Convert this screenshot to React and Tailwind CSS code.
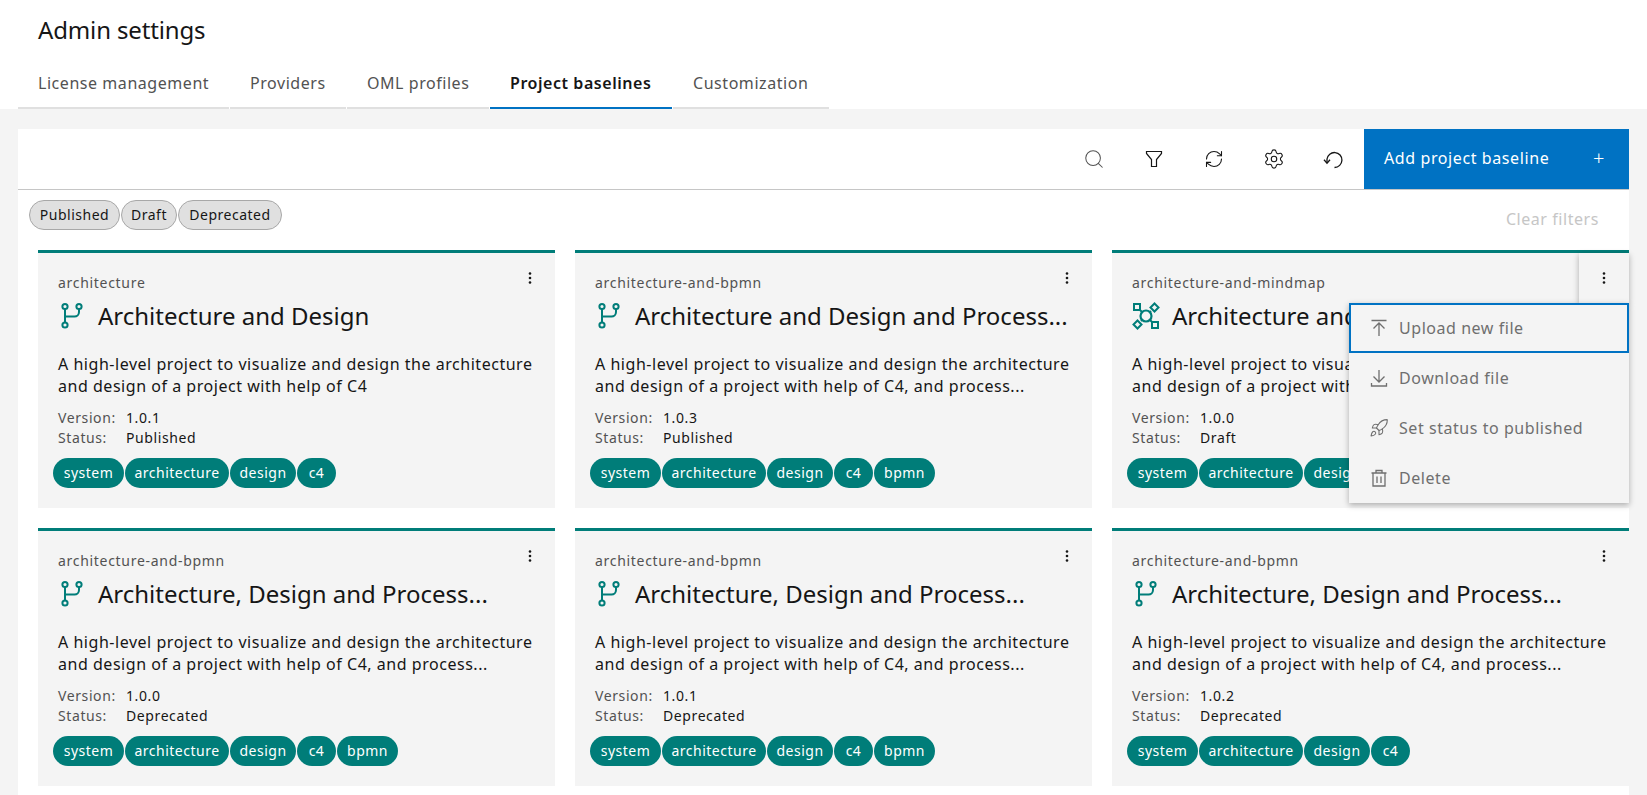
import React from "react";
import { Search, RefreshCw, Settings, Rocket } from "lucide-react";

const tabs = [
  ["License management", "w-[211px]"],
  ["Providers", "w-[116px]"],
  ["OML profiles", "w-[142px]"],
  ["Project baselines", "w-[182px]", true],
  ["Customization", "w-[156px]"],
];

const D1 = "A high-level project to visualize and design the architecture";
const D2 = "and design of a project with help of C4, and process...";
const base = ["system", "architecture", "design", "c4"];
const withB = [...base, "bpmn"];
const A = "Architecture, Design and Process...";

const tagW = {
  system: "w-[71px]",
  architecture: "w-[104px]",
  design: "w-[66px]",
  c4: "w-[39px]",
  bpmn: "w-[61px]",
};
const chipW = { Published: "w-[91px]", Draft: "w-[56px]", Deprecated: "w-[104px]" };

const cards = [
  { id: "architecture", title: "Architecture and Design", d2: "and design of a project with help of C4", v: "1.0.1", s: "Published", tags: base },
  { id: "architecture-and-bpmn", title: "Architecture and Design and Process...", d2: D2, v: "1.0.3", s: "Published", tags: withB },
  { id: "architecture-and-mindmap", title: "Architecture and Design and Mindmap", d2: D2, v: "1.0.0", s: "Draft", tags: base, mind: true, open: true },
  { id: "architecture-and-bpmn", title: A, d2: D2, v: "1.0.0", s: "Deprecated", tags: withB },
  { id: "architecture-and-bpmn", title: A, d2: D2, v: "1.0.1", s: "Deprecated", tags: withB },
  { id: "architecture-and-bpmn", title: A, d2: D2, v: "1.0.2", s: "Deprecated", tags: base },
];

function BranchIcon() {
  return (
    <svg width="28" height="28" viewBox="0 0 28 28" fill="none" stroke="#007d79" strokeWidth="2" className="shrink-0">
      <circle cx="7" cy="4.5" r="2.6" />
      <circle cx="21" cy="4.5" r="2.6" />
      <circle cx="7" cy="23" r="2.6" />
      <path d="M7 7.100V20.400M21 7.100V10a4.500 4.500 0 0 1-4.500 4.500H7" />
    </svg>
  );
}

function MindIcon() {
  return (
    <svg width="28" height="28" viewBox="0 0 28 28" fill="none" stroke="#007d79" strokeWidth="2" className="shrink-0">
      <circle cx="14" cy="14" r="5.500" strokeWidth="2.200" />
      <rect x="2" y="2" width="6" height="6" />
      <rect x="20" y="20" width="6" height="6" />
      <path d="M22.500 1.500l4 4-4 4-4-4zM5.500 18.500l4 4-4 4-4-4z" />
      <path d="M8 8l2.500 2.500M17.500 17.500L20 20M19 9l-1.500 1.500M9 19l1.500-1.500" />
    </svg>
  );
}

function Kebab() {
  return (
    <svg width="16" height="16" viewBox="0 0 16 16" fill="#161616">
      <circle cx="8" cy="3.500" r="1.300" />
      <circle cx="8" cy="8" r="1.300" />
      <circle cx="8" cy="12.500" r="1.300" />
    </svg>
  );
}

function UploadIcon() {
  return (
    <svg width="20" height="20" viewBox="0 0 20 20" fill="none" stroke="#6f6f6f" strokeWidth="1.300">
      <path d="M2.500 2.500h15M10 18V5M4.500 10.500L10 5l5.500 5.500" />
    </svg>
  );
}
function DownloadIcon() {
  return (
    <svg width="20" height="20" viewBox="0 0 20 20" fill="none" stroke="#6f6f6f" strokeWidth="1.300">
      <path d="M10 2v12M4.500 8.500L10 14l5.500-5.500M2.500 15v3h15v-3" />
    </svg>
  );
}
function TrashIcon() {
  return (
    <svg width="20" height="20" viewBox="0 0 20 20" fill="none" stroke="#6f6f6f" strokeWidth="1.300">
      <path d="M2.500 5h15M7 5V2.500h6V5M4 5v13h12V5M8 8.500v6.500M12 8.500v6.500" />
    </svg>
  );
}
function FunnelIcon() {
  return (
    <svg width="20" height="20" viewBox="0 0 20 20" fill="none" stroke="#161616" strokeWidth="1.200">
      <path d="M2.500 2.500h15v2l-5 6v7h-5v-7l-5-6z" />
    </svg>
  );
}
function ResetIcon() {
  return (
    <svg width="22" height="22" viewBox="0 0 22 22" fill="none" stroke="#161616" strokeWidth="1.300">
      <path d="M4 15V11a7.500 7.500 0 1 1 7.500 8.500" />
      <path d="M1 11.800l3 3.400 3-3.400" />
    </svg>
  );
}

function Card({ c }) {
  return (
    <div className="relative h-[258px] border-t-[3px] border-[#007d79] bg-[#f4f4f4] pt-5">
      <div className={`absolute right-0 top-0 z-10 flex h-[50px] w-[50px] items-center justify-center ${c.open ? "shadow-[0_2px_6px_rgba(0,0,0,0.3)]" : ""}`}>
        <Kebab />
      </div>
      <div className="pl-5 text-[14px] leading-5 tracking-[0.7px] text-[#525252]">{c.id}</div>
      <div className="mt-[7px] flex h-8 items-center pl-[20px]">
        {c.mind ? <MindIcon /> : <BranchIcon />}
        <div className="ml-3 whitespace-nowrap text-[24px] leading-8 text-[#161616]">{c.title}</div>
      </div>
      <div className="mt-[21px] whitespace-nowrap pl-5 text-[16px] leading-[22px] tracking-[0.53px] text-[#161616]">
        <div>{D1}</div>
        <div>{c.d2}</div>
      </div>
      <div className="mt-[11px] pl-5 text-[14px] leading-5 tracking-[0.6px]">
        <div className="flex"><span className="w-[68px] text-[#525252]">Version:</span><span className="text-[#161616]">{c.v}</span></div>
        <div className="flex"><span className="w-[68px] text-[#525252]">Status:</span><span className="text-[#161616]">{c.s}</span></div>
      </div>
      <div className="mt-[10px] flex gap-[1px] pl-[15px]">
        {c.tags.map((t) => (
          <span key={t} className={`flex h-[30px] items-center justify-center rounded-[15px] bg-[#007d79] pb-[2px] text-[14px] tracking-[0.5px] text-white ${tagW[t]}`}>{t}</span>
        ))}
      </div>
      {c.open && (
        <div className="absolute right-0 top-[50px] z-20 w-[280px] bg-[#f4f4f4] text-[16px] tracking-[0.55px] text-[#6f6f6f] shadow-[0_2px_6px_rgba(0,0,0,0.3)]">
          <div className="flex h-[50px] items-center gap-[10px] border-2 border-[#0072c3] pl-[18px]"><UploadIcon />Upload new file</div>
          <div className="flex h-[50px] items-center gap-[10px] pl-5"><DownloadIcon />Download file</div>
          <div className="flex h-[50px] items-center gap-[10px] pl-5"><Rocket size={20} strokeWidth={1.300} color="#6f6f6f" />Set status to published</div>
          <div className="flex h-[50px] items-center gap-[10px] pl-5"><TrashIcon />Delete</div>
        </div>
      )}
    </div>
  );
}

export default function App() {
  return (
    <div className="h-[795px] overflow-hidden bg-[#f4f4f4] font-['Noto_Sans',sans-serif]">
      <header className="h-[109px] bg-white pl-[18px]">
        <div className="flex h-[60px] items-center pl-5 text-[24px] tracking-[-0.15px] text-[#161616]">Admin settings</div>
        <nav className="flex h-[49px] gap-[1px]">
          {tabs.map(([t, w, active]) => (
            <div
              key={t}
              className={`flex items-center border-b-2 pb-[1px] pl-5 text-[16px] tracking-[0.55px] ${w} ${active ? "border-[#0072c3] font-semibold text-[#161616]" : "border-[#e0e0e0] text-[#525252]"}`}
            >
              {t}
            </div>
          ))}
        </nav>
      </header>
      <main className="mx-[18px] mt-5 bg-white">
        <div className="flex h-[61px] justify-end border-b border-[#c6c6c6]">
          {[
            <Search size={22} strokeWidth={1.100} color="#525252" />,
            <FunnelIcon />,
            <RefreshCw size={20} strokeWidth={1.300} color="#161616" />,
            <Settings size={22} strokeWidth={1.200} color="#161616" />,
            <ResetIcon />,
          ].map((icon, i) => (
            <div key={i} className="flex h-[60px] w-[60px] items-center justify-center">{icon}</div>
          ))}
          <div className="flex h-[60px] w-[265px] items-center justify-between bg-[#0072c3] pb-[2px] pl-5 pr-[24px] text-[16px] tracking-[0.6px] text-white">
            <span>Add project baseline</span>
            <span className="text-[20px] font-light">+</span>
          </div>
        </div>
        <div className="flex h-[60px] justify-between pl-[11px] pr-[30px] pt-[10px]">
          <div className="flex gap-[1px]">
            {["Published", "Draft", "Deprecated"].map((c) => (
              <span key={c} className={`flex h-[30px] items-center justify-center rounded-[15px] border border-[#a8a8a8] bg-[#e0e0e0] pb-[2px] text-[14px] tracking-[0.5px] text-[#161616] ${chipW[c]}`}>{c}</span>
            ))}
          </div>
          <div className="flex h-[38px] items-center text-[16px] tracking-[0.56px] text-[#c6c6c6]">Clear filters</div>
        </div>
        <div className="grid grid-cols-3 gap-5 pb-5 pl-5">
          {cards.map((c, i) => (
            <Card key={i} c={c} />
          ))}
        </div>
      </main>
    </div>
  );
}
